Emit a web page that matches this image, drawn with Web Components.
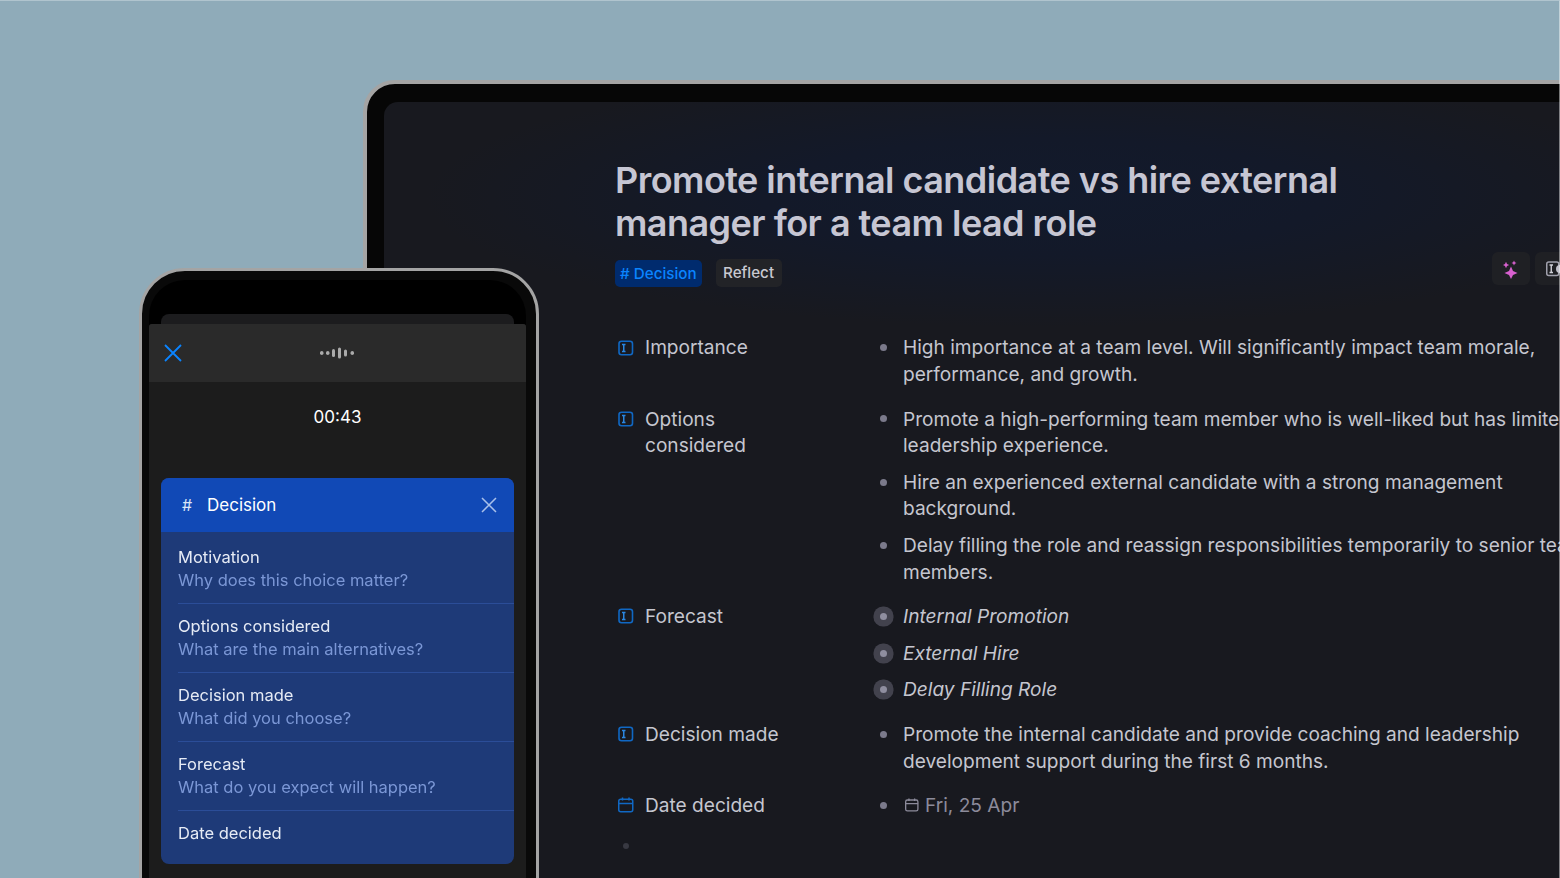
<!DOCTYPE html>
<html lang="en">
<head>
<meta charset="utf-8">
<title>Decision</title>
<style>
html,body{margin:0;padding:0;background:#8fabb9;overflow:hidden}
body{font-family:Inter,"Liberation Sans",sans-serif}
</style>
</head>
<body>
<template id="t-stage"><style>
:host{display:block;position:relative;width:1560px;height:878px;overflow:hidden;background:#8fabb9;font-family:Inter,"Liberation Sans",sans-serif}
.wrap{position:absolute;inset:0;filter:blur(.3px)}
.edge{position:absolute;inset:0;box-sizing:border-box;border-top:1px solid rgba(255,255,255,.3);border-right:1px solid rgba(255,255,255,.45);pointer-events:none}
</style><div class="wrap"><slot></slot></div><div class="edge"></div></template>

<template id="t-laptop"><style>
:host{display:block;position:absolute;left:363px;top:80px;width:1400px;height:900px;box-sizing:border-box;border:4px solid #a4a4a4;border-radius:32px;background:#060606;padding:18px 17px}
.screen{height:100%;border-radius:14px;box-sizing:border-box;padding:57px 0 0 231px;
background:radial-gradient(ellipse 620px 130px at 660px 95px,#121a2c 0%,#131929 45%,rgba(24,25,31,0) 100%),#18191f}
</style><div class="screen"><slot></slot></div></template>

<template id="t-title"><style>
:host{display:block;font-size:36px;line-height:43.2px;font-weight:600;letter-spacing:-.54px;color:#c6c6d3;width:760px}
</style><slot></slot></template>

<template id="t-tagbar"><style>
:host{display:flex;align-items:center;gap:14px;margin-top:12.6px;height:30px;width:958px;position:relative}
.end{margin-left:auto;display:flex;gap:5px;margin-top:-9px}
</style><slot></slot><div class="end"><slot name="end"></slot></div></template>

<template id="t-tag"><style>
:host{display:inline-flex;align-items:center;height:27px;padding:0 5px;border-radius:5px;font-size:15.2px;font-weight:500;background:#002b6e;color:#0a84ff}
:host([plain]){background:#222327;color:#c9c9d1;padding:0 7.5px;height:28px;margin-top:-1px}
</style><slot></slot></template>

<template id="t-action"><style>
:host{display:flex;align-items:center;width:38px;height:32.500px;border-radius:6px;background:#1f2024;flex:none;padding-left:11px;box-sizing:border-box;overflow:hidden}
::slotted(svg){flex:none;display:block}
</style><slot></slot></template>

<template id="t-props"><style>
:host{display:flex;flex-direction:column;gap:18px;margin-top:46.400px;width:950px}
</style><slot></slot></template>

<template id="t-prop"><style>
:host{display:flex;align-items:flex-start;font-size:19.100px;line-height:26.6px;color:#c5c6cf}
.ico{width:30px;flex:none;height:26.6px;display:flex;align-items:center;padding-left:3px;box-sizing:border-box}
.label{width:228px;flex:none;padding-right:60px;box-sizing:border-box}
.vals{display:flex;flex-direction:column;gap:10px;width:730px;flex:none}
</style><div class="ico"><slot name="icon"></slot></div><div class="label"><slot name="label"></slot></div><div class="vals"><slot></slot></div></template>

<template id="t-item"><style>
:host{display:flex;align-items:flex-start;font-size:19.100px;line-height:26.6px;color:#c5c6cf}
.mark{width:20px;height:26.6px;flex:none;display:flex;align-items:center;justify-content:center;margin-right:10px}
.mark i{display:block;width:7px;height:7px;border-radius:50%;background:#7b7a8b}
:host([ring]) .mark i{width:7px;height:7px;background:#8f8e9f;box-shadow:0 0 0 6.5px #42424d}
:host([ring]){font-style:italic}
:host([muted]){color:#8c8b9b}
.text{width:705px}
</style><div class="mark"><i></i></div><div class="text"><slot></slot></div></template>

<template id="t-enddot"><style>
:host{display:block;width:6px;height:6px;border-radius:50%;background:#383942;margin:6px 0 0 8px}
</style></template>

<template id="t-phone"><style>
:host{display:block;position:absolute;left:139px;top:268px;width:399.500px;height:720px;box-sizing:border-box;border:3px solid #a4a4a4;border-radius:46px;background:#090909;padding:9px 9.500px 0 7px}
.screen{height:100%;background:#000;border-radius:36px 36px 0 0;display:flex;flex-direction:column;box-sizing:border-box;padding-top:34px}
.back{height:10px;margin:0 12px;background:#1c1c1e;border-radius:8px 8px 0 0;flex:none}
.sheet{flex:1;background:#1c1c1c;border-radius:3px 3px 0 0;display:flex;flex-direction:column}
</style><div class="screen"><div class="back"></div><div class="sheet"><slot></slot></div></div></template>

<template id="t-rec"><style>
:host{display:flex;align-items:center;height:58px;background:#2a2a2a;position:relative;justify-content:center;border-radius:3px 3px 0 0}
.x{position:absolute;left:15px;top:20px}
</style><div class="x"><slot name="close"></slot></div><slot></slot></template>

<template id="t-timer"><style>
:host{display:block;text-align:center;color:#fff;font-size:17px;line-height:22px;margin-top:24px;font-weight:400}
</style><slot></slot></template>

<template id="t-card"><style>
:host{display:block;margin:50px 12px 0;height:386px;border-radius:8px;overflow:hidden;background:#1e3a78;flex:none}
.head{height:54px;background:#1149b6;display:flex;align-items:center;color:#fff;font-size:17px;padding:0 17px 0 20px;font-weight:400}
.hash{width:26px;font-size:16px;color:#dbe5f7;flex:none;padding-left:1px;box-sizing:border-box}
.name{flex:1}
.rows{padding-top:3px}
</style><div class="head"><span class="hash">#</span><span class="name"><slot name="name"></slot></span><slot name="close"></slot></div><div class="rows"><slot></slot></div></template>

<template id="t-row"><style>
:host{display:block;margin-left:17px;height:69px;box-sizing:border-box;border-bottom:1px solid #2b4d98;padding-top:11px;font-size:16.5px;line-height:23px;color:#e6ebf5}
:host(:last-child){border-bottom:0}
.q{color:#7b97d6}
</style><div><slot></slot></div><div class="q"><slot name="q"></slot></div></template>

<app-stage>
  <laptop-frame>
    <doc-title>Promote internal candidate vs hire external manager for a team lead role</doc-title>
    <tag-bar>
      <tag-chip># Decision</tag-chip>
      <tag-chip plain>Reflect</tag-chip>
      <action-btn slot="end"><svg width="16" height="20" viewBox="0 0 16 20"><g fill="#d860cf"><path d="M8 7.500 10 12 14.500 14 10 16 8 20 6 16 1.500 14 6 12Z"/><path d="M3 2.800 4 5 6.200 6 4 7 3 9.200 2 7 -.2 6 2 5Z"/><path d="M11 1.500 11.800 3.200 13.500 4 11.800 4.800 11 6.500 10.200 4.800 8.500 4 10.200 3.200Z"/></g></svg></action-btn>
      <action-btn slot="end"><svg width="20" height="16" viewBox="0 0 20 16"><rect x=".75" y="1" width="12" height="13.500" rx="2" fill="none" stroke="#a0a0ac" stroke-width="1.500"/><path d="M3.500 4h3.500M3.500 11.500h3.500M5.250 4v7.500" stroke="#d0d0d8" stroke-width="1.400" fill="none"/><circle cx="14" cy="8" r="4" fill="#c0c0ca"/></svg></action-btn>
    </tag-bar>
    <doc-props>
      <doc-prop><icon-text slot="icon"></icon-text><span slot="label">Importance</span>
        <doc-item>High importance at a team level. Will significantly impact team morale, performance, and growth.</doc-item></doc-prop>
      <doc-prop><icon-text slot="icon"></icon-text><span slot="label">Options considered</span>
        <doc-item>Promote a high-performing team member who is well-liked but has limited leadership experience.</doc-item>
        <doc-item>Hire an experienced external candidate with a strong management background.</doc-item>
        <doc-item>Delay filling the role and reassign responsibilities temporarily to senior team members.</doc-item></doc-prop>
      <doc-prop><icon-text slot="icon"></icon-text><span slot="label">Forecast</span>
        <doc-item ring>Internal Promotion</doc-item>
        <doc-item ring>External Hire</doc-item>
        <doc-item ring>Delay Filling Role</doc-item></doc-prop>
      <doc-prop><icon-text slot="icon"></icon-text><span slot="label">Decision made</span>
        <doc-item>Promote the internal candidate and provide coaching and leadership development support during the first 6 months.</doc-item></doc-prop>
      <doc-prop><icon-cal slot="icon"></icon-cal><span slot="label">Date decided</span>
        <doc-item muted><icon-cal small></icon-cal>Fri, 25 Apr</doc-item></doc-prop>
      <end-dot></end-dot>
    </doc-props>
  </laptop-frame>

  <phone-frame>
    <rec-bar>
      <svg slot="close" width="18" height="18" viewBox="0 0 18 18"><path d="M1 1 17 17M17 1 1 17" stroke="#0a84ff" stroke-width="1.800" fill="none"/></svg>
      <svg width="36" height="12" viewBox="0 0 36 12"><g fill="#aaa"><rect x="0" y="4" width="3.500" height="4" rx="1.750"/><rect x="6" y="4" width="3.500" height="4" rx="1.750"/><rect x="12" y="2" width="3" height="8" rx="1.500"/><rect x="18" y=".5" width="3" height="11" rx="1.500"/><rect x="24" y="2.500" width="3" height="7" rx="1.500"/><rect x="30.500" y="4" width="3.500" height="4" rx="1.750"/></g></svg>
    </rec-bar>
    <rec-timer>00:43</rec-timer>
    <decision-card>
      <span slot="name">Decision</span>
      <svg slot="close" width="16" height="16" viewBox="0 0 16 16"><path d="M1 1 15 15M15 1 1 15" stroke="#a9c0ea" stroke-width="1.500" fill="none"/></svg>
      <card-row>Motivation<span slot="q">Why does this choice matter?</span></card-row>
      <card-row>Options considered<span slot="q">What are the main alternatives?</span></card-row>
      <card-row>Decision made<span slot="q">What did you choose?</span></card-row>
      <card-row>Forecast<span slot="q">What do you expect will happen?</span></card-row>
      <card-row>Date decided</card-row>
    </decision-card>
  </phone-frame>
</app-stage>

<script>
function reg(tag,tid){
  customElements.define(tag,class extends HTMLElement{
    constructor(){super();const r=this.attachShadow({mode:'open'});
      r.appendChild(document.getElementById(tid).content.cloneNode(true));}
  });
}
reg('app-stage','t-stage');reg('laptop-frame','t-laptop');reg('doc-title','t-title');
reg('tag-bar','t-tagbar');reg('tag-chip','t-tag');reg('action-btn','t-action');
reg('doc-props','t-props');reg('doc-prop','t-prop');reg('doc-item','t-item');reg('end-dot','t-enddot');
reg('phone-frame','t-phone');reg('rec-bar','t-rec');reg('rec-timer','t-timer');
reg('decision-card','t-card');reg('card-row','t-row');
customElements.define('icon-text',class extends HTMLElement{constructor(){super();
  this.attachShadow({mode:'open'}).innerHTML='<style>:host{display:block;width:16px;height:16px}svg{display:block}</style><svg width="16" height="16" viewBox="0 0 16 16"><rect x="1" y="1.250" width="13.500" height="13.500" rx="2.500" fill="none" stroke="#1068c4" stroke-width="1.600"/><path d="M4 4.500H7.500M4 11.500H7.500M5.750 4.500v7" stroke="#2a86e0" stroke-width="1.500" fill="none"/></svg>';}});
customElements.define('icon-cal',class extends HTMLElement{constructor(){super();
  const s=this.hasAttribute('small'),c=s?'#8c8b9b':'#1068c4',w=s?14:16;
  this.attachShadow({mode:'open'}).innerHTML='<style>:host{display:'+(s?'inline-block':'block')+';width:'+w+'px;height:'+w+'px;'+(s?'margin:0 6px 0 2px;vertical-align:0':'')+'}svg{display:block}</style><svg width="'+w+'" height="'+w+'" viewBox="0 0 16 16" fill="none" stroke="'+c+'" stroke-width="1.500"><rect x=".75" y="2.250" width="14" height="12.500" rx="2"/><path d="M1 6.500H15M4.500 .5V3.500M11 .5V3.500"/></svg>';}});
</script>
</body>
</html>
